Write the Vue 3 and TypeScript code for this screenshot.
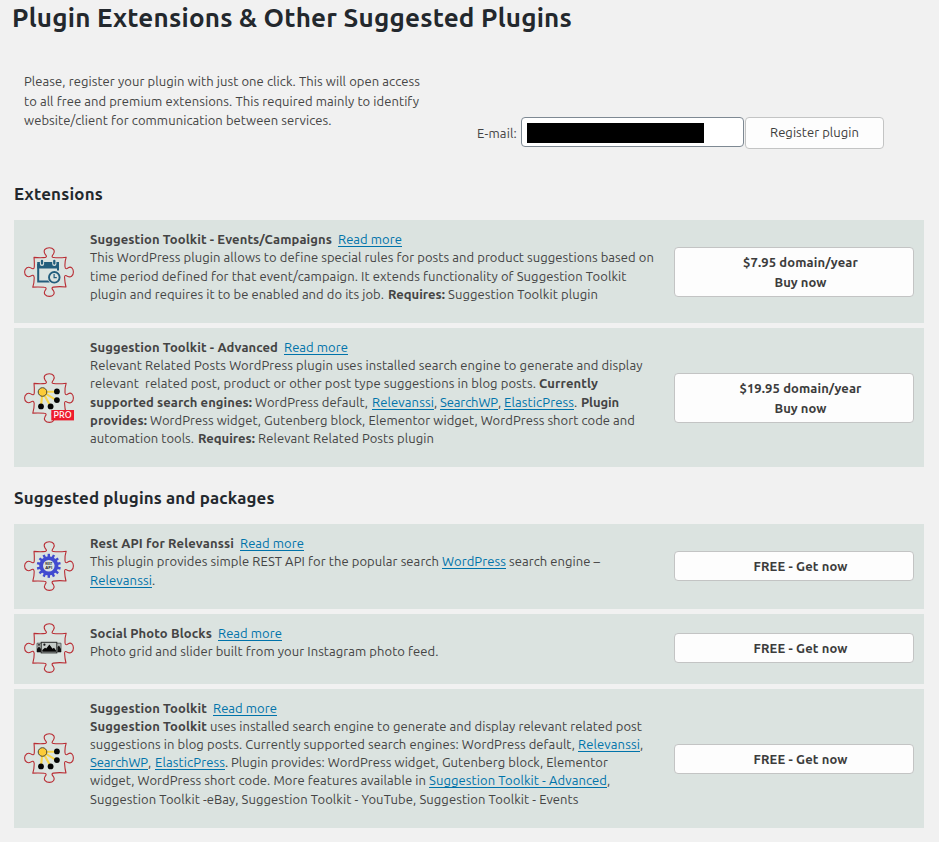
<script setup lang="ts">
type Kind = 'text' | 'bold' | 'link'
// A run of text: kind, content, start and end positions within the text column
type Run = [Kind, string, number, number]
type IconName = 'calendar' | 'pro' | 'api' | 'photos' | 'graph'
interface Plugin {
  name: string
  icon: IconName
  lines: Run[][]
  price?: string
  action: string
}

const sections: { title: string; width: number; plugins: Plugin[] }[] = [
  {
    title: 'Extensions',
    width: 89,
    plugins: [
      {
        name: 'events',
        icon: 'calendar',
        price: '$7.95 domain/year',
        action: 'Buy now',
        lines: [
          [['bold', 'Suggestion Toolkit - Events/Campaigns', 0, 242], ['link', 'Read more', 248, 312]],
          [['text', 'This WordPress plugin allows to define special rules for posts and product suggestions based on', 0, 563.5]],
          [['text', 'time period defined for that event/campaign. It extends functionality of Suggestion Toolkit', 0, 536]],
          [['text', 'plugin and requires it to be enabled and do its job.', 0, 294], ['bold', 'Requires:', 298, 355], ['text', 'Suggestion Toolkit plugin', 358, 508]],
        ],
      },
      {
        name: 'advanced',
        icon: 'pro',
        price: '$19.95 domain/year',
        action: 'Buy now',
        lines: [
          [['bold', 'Suggestion Toolkit - Advanced', 0, 188], ['link', 'Read more', 194, 258]],
          [['text', 'Relevant Related Posts WordPress plugin uses installed search engine to generate and display', 0, 552.5]],
          [['text', 'relevant  related post, product or other post type suggestions in blog posts.', 0, 446], ['bold', 'Currently', 449, 508]],
          [['bold', 'supported search engines:', 0, 162], ['text', 'WordPress default,', 165, 278], ['link', 'Relevanssi', 282, 344], ['text', ',', 344, 347], ['link', 'SearchWP', 350, 408], ['text', ',', 408, 411], ['link', 'ElasticPress', 414, 484], ['text', '.', 484, 487], ['bold', 'Plugin', 491, 529]],
          [['bold', 'provides:', 0, 57], ['text', 'WordPress widget, Gutenberg block, Elementor widget, WordPress short code and', 60, 545]],
          [['text', 'automation tools.', 0, 104], ['bold', 'Requires:', 108, 165], ['text', 'Relevant Related Posts plugin', 168, 344]],
        ],
      },
    ],
  },
  {
    title: 'Suggested plugins and packages',
    width: 260.5,
    plugins: [
      {
        name: 'rest-api',
        icon: 'api',
        action: 'FREE - Get now',
        lines: [
          [['bold', 'Rest API for Relevanssi', 0, 144], ['link', 'Read more', 150, 214]],
          [['text', 'This plugin provides simple REST API for the popular search', 0, 349], ['link', 'WordPress', 352, 416], ['text', 'search engine –', 419, 510]],
          [['link', 'Relevanssi', 0, 62], ['text', '.', 62, 65]],
        ],
      },
      {
        name: 'photo-blocks',
        icon: 'photos',
        action: 'FREE - Get now',
        lines: [
          [['bold', 'Social Photo Blocks', 0, 122], ['link', 'Read more', 128, 192]],
          [['text', 'Photo grid and slider built from your Instagram photo feed.', 0, 348.5]],
        ],
      },
      {
        name: 'toolkit',
        icon: 'graph',
        action: 'FREE - Get now',
        lines: [
          [['bold', 'Suggestion Toolkit', 0, 117], ['link', 'Read more', 123, 187]],
          [['bold', 'Suggestion Toolkit', 0, 117], ['text', 'uses installed search engine to generate and display relevant related post', 120, 552]],
          [['text', 'suggestions in blog posts. Currently supported search engines: WordPress default,', 0, 485], ['link', 'Relevanssi', 488, 550], ['text', ',', 550, 553]],
          [['link', 'SearchWP', 0, 58], ['text', ',', 58, 61], ['link', 'ElasticPress', 65, 135], ['text', '.', 135, 138], ['text', 'Plugin provides: WordPress widget, Gutenberg block, Elementor', 141, 518]],
          [['text', 'widget, WordPress short code. More features available in', 0, 336], ['link', 'Suggestion Toolkit - Advanced', 339, 517], ['text', ',', 517, 520]],
          [['text', 'Suggestion Toolkit -eBay, Suggestion Toolkit - YouTube, Suggestion Toolkit - Events', 0, 488.5]],
        ],
      },
    ],
  },
]

const intro: [string, number][] = [
  ['Please, register your plugin with just one click. This will open access', 396],
  ['to all free and premium extensions. This required mainly to identify', 395],
  ['website/client for communication between services.', 307.5],
]

// Tracks a text run so that it spans the given width
const vFit = {
  mounted(el: HTMLElement, binding: { value: number }) {
    const natural = el.getBoundingClientRect().width
    const count = (el.textContent ?? '').length
    el.style.letterSpacing = `${(binding.value - natural) / count}px`
  },
}

const gapBefore = (line: Run[], i: number) => (i === 0 ? line[0][2] : line[i][2] - line[i - 1][3])
const teeth = Array.from({ length: 14 }, (_, i) => (i * 360) / 14)
</script>

<template>
  <main class="page">
    <h1><span v-fit="560" class="run">Plugin Extensions &amp; Other Suggested Plugins</span></h1>

    <div class="register">
      <p class="intro">
        <span v-for="[text, width] in intro" :key="text" class="intro-line"><span v-fit="width" class="run">{{ text }}</span></span>
      </p>
      <form class="form" @submit.prevent>
        <label for="email"><span v-fit="40" class="run">E-mail:</span></label>
        <div id="email" class="field"><span class="redacted"></span></div>
        <button class="btn register-btn" type="submit"><span v-fit="89" class="run">Register plugin</span></button>
      </form>
    </div>

    <section v-for="section in sections" :key="section.title">
      <h2><span v-fit="section.width" class="run">{{ section.title }}</span></h2>
      <div class="list">
        <article v-for="plugin in section.plugins" :key="plugin.name" class="card">
          <svg class="icon" viewBox="0 0 50 50" fill="none">
            <path
              class="puzzle"
              d="M10 10.4Q17 11.2 21.4 10.4C23.4 9.8 22 8.2 21 7C18.8 3.2 21.5.7 25.3.7C29.3.7 31.5 3.6 29.4 7C28.2 8.8 27.2 10.3 29.5 10.5Q35 11.2 42.2 10.2Q40.6 15 41 19.8C41.2 22.5 42.8 21.8 44.3 20.7C47 19 49.4 21.5 49.4 25C49.4 29 46.5 31 43.4 29.2C41.3 27.8 40.4 28.5 40.6 30.8Q40.8 35.6 42 40Q35 39.3 29.3 40.1C27 40.7 28.3 42.2 29.5 43.7C31.3 46.8 29 49.4 25.4 49.4C21.6 49.4 19.2 46.6 21 43.7C22.5 41.8 22.6 40.3 20.4 40.2Q15 39.8 8.8 40.1Q10.3 35.4 10.2 30.6C10.1 28 8.5 27.8 6.8 29.1C3.8 30.8.6 28.6.6 25C.6 21.5 3.8 19 6.8 20.9C8.8 22.3 10.3 22.2 10.3 19.8Q10.5 15 10 10.4Z"
            />
            <g v-if="plugin.icon === 'calendar'">
              <path d="M14.2 17V34.4H26M34 20V23.5" stroke="#225d7c" stroke-width="2" />
              <path d="M13.2 15H35V21.5H13.2Z" fill="#225d7c" />
              <path d="M18 13.5V17M30.3 13.5V17" stroke="#dbe3e0" stroke-width="4.2" stroke-linecap="round" />
              <path d="M18 13.8V16.5M30.3 13.8V16.5" stroke="#225d7c" stroke-width="2.3" stroke-linecap="round" />
              <circle cx="30.3" cy="30.3" r="6.9" fill="#dbe3e0" />
              <circle cx="30.3" cy="30.3" r="5.3" stroke="#225d7c" stroke-width="1.9" />
              <path d="M30.1 27V30.7H32.8" stroke="#225d7c" stroke-width="1.2" />
            </g>
            <g v-else-if="plugin.icon === 'pro' || plugin.icon === 'graph'">
              <path d="M18.5 18.7H32.5M18.5 18.7L32.5 27.3M18.5 18.7L26.7 33.4M18.5 18.7L17 33.4" stroke="#f9d548" stroke-width="2.1" />
              <circle cx="18.5" cy="19" r="4.3" fill="#fccb37" stroke="#4d4933" stroke-width="1" />
              <g fill="#050505">
                <circle cx="32.9" cy="18.4" r="2.9" />
                <circle cx="32.9" cy="27.1" r="2.9" />
                <circle cx="26.6" cy="33.4" r="2.9" />
                <circle cx="17" cy="33.4" r="2.9" />
              </g>
              <g v-if="plugin.icon === 'pro'">
                <rect x="27.3" y="37" width="22.7" height="10.4" fill="#ee1c2e" />
                <text class="pro" x="38.6" y="45.3" textLength="18" lengthAdjust="spacingAndGlyphs">PRO</text>
              </g>
            </g>
            <g v-else-if="plugin.icon === 'api'">
              <rect v-for="a in teeth" :key="a" x="23.6" y="12.8" width="2.4" height="4" fill="#414bd0" :transform="`rotate(${a} 24.8 24.8)`" />
              <circle cx="24.8" cy="24.8" r="7.7" stroke="#414bd0" stroke-width="3.8" />
              <text class="api" x="24.8" y="24.4" textLength="7" lengthAdjust="spacingAndGlyphs">REST</text>
              <text class="api" x="24.8" y="28.1" textLength="7" lengthAdjust="spacingAndGlyphs">API</text>
            </g>
            <g v-else>
              <path d="M13 20.2H37V29H13Z" fill="#b3bab7" stroke="#4a4d4c" stroke-width=".8" />
              <path d="M13 29V26L15 23.5L17 26V29ZM33.5 29V24L35 22.5L37 26V29Z" fill="#111" />
              <circle cx="15" cy="21.8" r=".9" fill="#111" />
              <rect x="17.2" y="19.3" width="15.6" height="10.6" fill="#c5ccc9" stroke="#292b2a" stroke-width="1" />
              <path d="M18.3 28.8V27L21 24.8L22.3 25.6L25.4 21.5L28.5 25.7L30 24.8L32 27.4V28.8Z" fill="#070707" />
              <circle cx="20.4" cy="21.7" r="1.1" fill="#111" />
            </g>
          </svg>
          <div class="body">
            <div v-for="(line, n) in plugin.lines" :key="n" class="line">
              <template v-for="(run, i) in line" :key="i"><span class="gap" :style="{ width: gapBefore(line, i) + 'px' }"></span><a v-if="run[0] === 'link'" v-fit="run[3] - run[2]" class="run link" href="#">{{ run[1] }}</a><span v-else v-fit="run[3] - run[2]" class="run" :class="run[0]">{{ run[1] }}</span></template>
            </div>
          </div>
          <button class="btn buy" :class="{ single: !plugin.price }">
            <span v-if="plugin.price" v-fit="plugin.price.length === 17 ? 115 : 122" class="run">{{ plugin.price }}</span>
            <span v-fit="plugin.price ? 52 : 94" class="run">{{ plugin.action }}</span>
          </button>
        </article>
      </div>
    </section>
  </main>
</template>

<style>
body {
  background: #f1f1f1;
}
</style>

<style scoped>
.page {
  box-sizing: border-box;
  width: 939px;
  height: 842px;
  overflow: hidden;
  padding: 0 15px 0 14px;
  color: #444;
  font-family: Ubuntu, "Noto Sans", "Open Sans", sans-serif;
  font-size: 13px;
}
.run {
  display: inline-block;
  white-space: pre;
}
h1 {
  margin: 0 0 0 -2px;
  height: 72px;
  line-height: 36px;
  font-size: 26px;
  font-weight: 700;
  color: #23282d;
}
.register {
  display: flex;
  height: 104.2px;
}
.intro {
  box-sizing: border-box;
  width: 453px;
  margin: 0;
  padding-left: 10px;
  line-height: 19.5px;
}
.intro-line {
  display: block;
}
.form {
  display: flex;
  align-items: flex-start;
  padding-top: 45px;
}
label {
  box-sizing: border-box;
  width: 44px;
  margin-left: 10px;
  line-height: 32px;
}
.field {
  box-sizing: border-box;
  width: 223px;
  height: 30px;
  padding: 5px;
  border: 1px solid #7e8993;
  border-radius: 4px;
  background: #fff;
}
.redacted {
  display: block;
  width: 177px;
  height: 20px;
  background: #000;
}
.btn {
  box-sizing: border-box;
  padding: 0;
  border: 1px solid #c3c4c4;
  border-radius: 4px;
  background: #fdfdfd;
  color: #3c3c3c;
  font: inherit;
}
.register-btn {
  width: 139px;
  height: 32px;
  margin-left: 1px;
  padding-bottom: 2px;
}
h2 {
  margin: 0;
  height: 44px;
  line-height: 36px;
  font-size: 16.9px;
  font-weight: 700;
  color: #23282d;
}
section + section h2 {
  margin-top: 13.1px;
}
.list {
  display: grid;
  gap: 5px;
}
.card {
  display: grid;
  grid-template-columns: 50px 568px 240px;
  column-gap: 16px;
  align-items: center;
  box-sizing: border-box;
  padding: 10px 0 10px 10px;
  background: #dbe3e0;
}
.icon {
  display: block;
  width: 50px;
  height: 50px;
  margin-top: 0.4px;
}
section + section .icon {
  margin: -0.25px 0 0.25px;
}
.puzzle {
  stroke: #b92e35;
  stroke-width: 1.1;
  stroke-linejoin: round;
}
.pro {
  font-size: 8.5px;
  font-weight: 500;
  fill: #fff;
  text-anchor: middle;
}
.api {
  font-size: 3.8px;
  font-weight: 700;
  fill: #161616;
  text-anchor: middle;
}
.body {
  align-self: start;
  padding-bottom: 10px;
}
.line {
  height: 18.2px;
  line-height: 18.2px;
  white-space: nowrap;
}
.gap {
  display: inline-block;
}
.bold {
  font-weight: 700;
}
.link {
  color: #0073aa;
  text-decoration: underline;
  text-underline-offset: 2px;
}
.buy {
  display: flex;
  flex-direction: column;
  align-items: center;
  justify-content: center;
  width: 240px;
  min-height: 30px;
  padding: 4px 0 4px 13px;
  line-height: 20px;
  font-weight: 700;
}
.single {
  margin-top: -0.9px;
}
.card:last-child .single {
  margin-top: 0.6px;
}
</style>
